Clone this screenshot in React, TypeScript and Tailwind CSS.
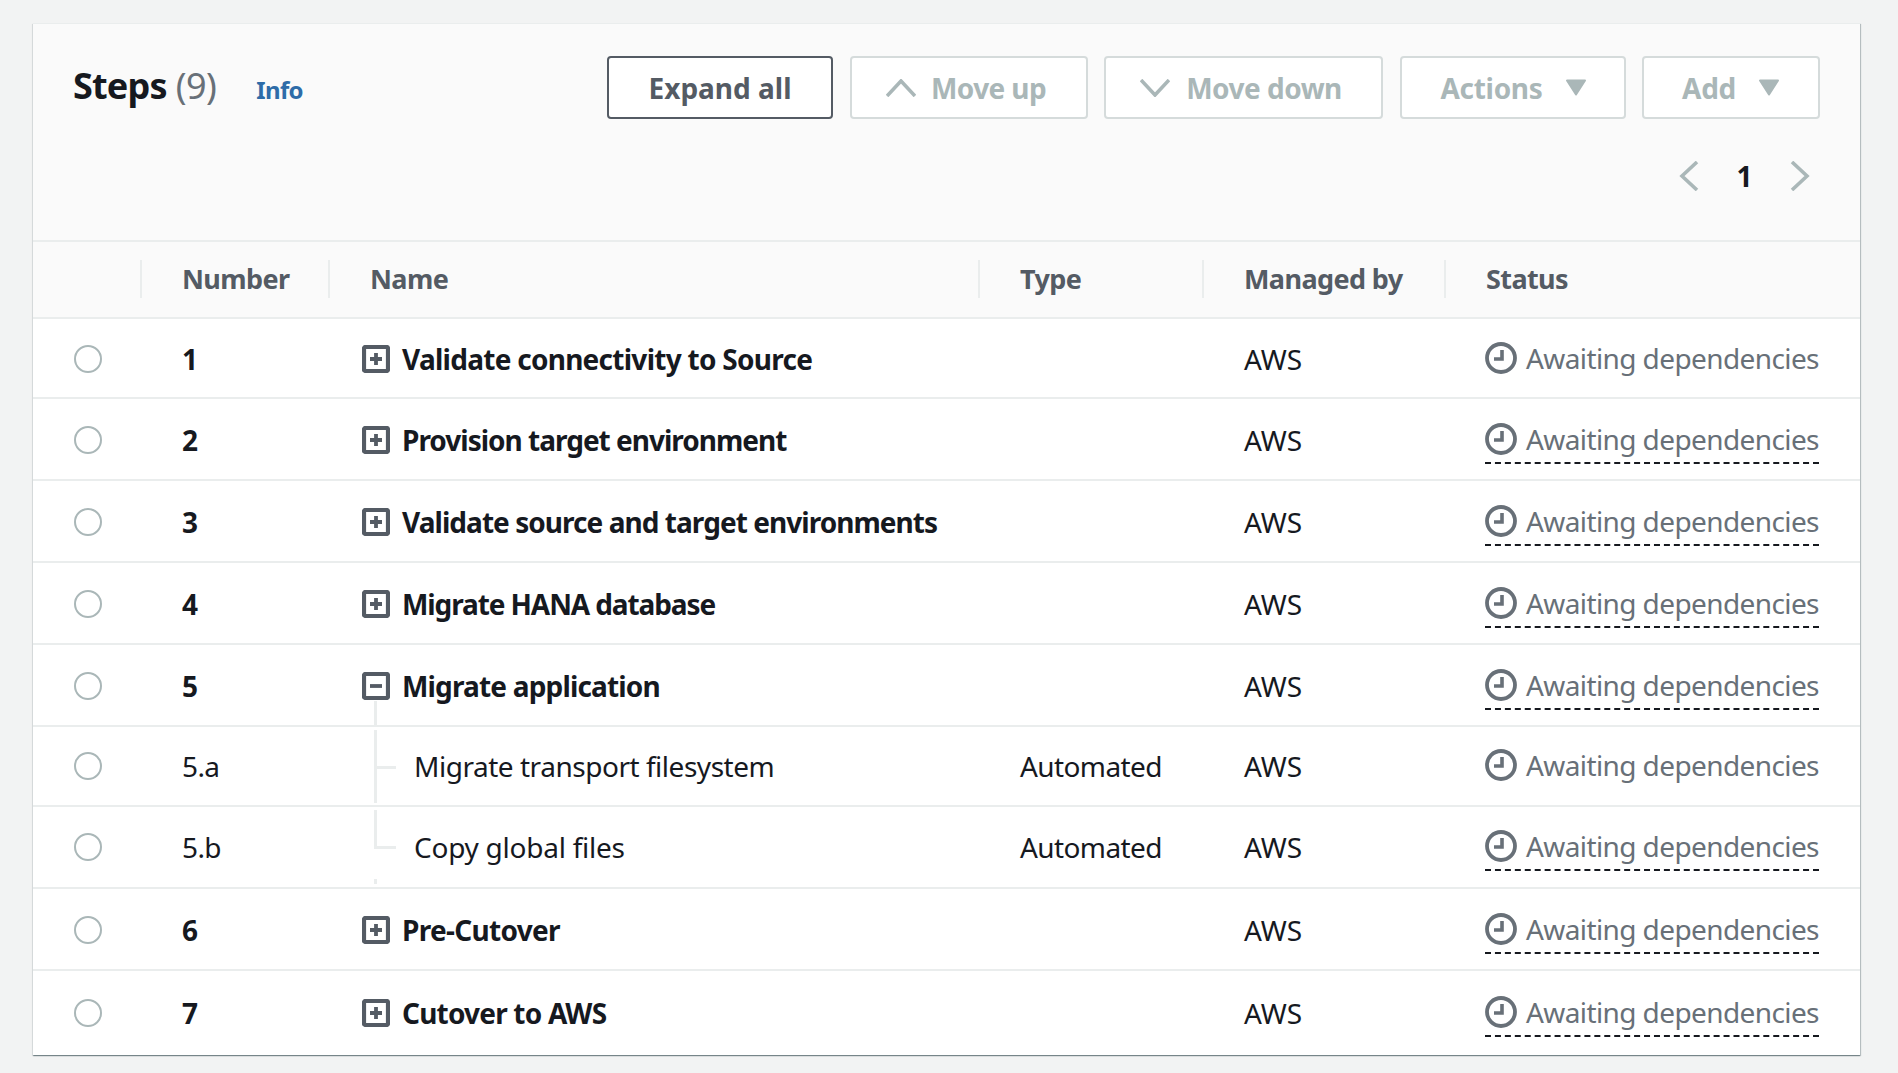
import React from "react";

const GRID = "grid grid-cols-[107px_188px_650px_224px_242px_1fr]";

function Chevron({ d, w = 30, h = 18, vb = "0 0 30 18" }: { d: string; w?: number; h?: number; vb?: string }) {
  return (
    <svg width={w} height={h} viewBox={vb} fill="none" stroke="#aab7b8" strokeWidth="3.6">
      <path d={d} />
    </svg>
  );
}

function Caret() {
  return (
    <svg width="22" height="17" viewBox="0 0 22 17">
      <path d="M2 1.5h18L11 15.5z" fill="#aab7b8" stroke="#aab7b8" strokeWidth="2" strokeLinejoin="round" />
    </svg>
  );
}

function Btn({ className, children }: { className: string; children: React.ReactNode }) {
  return (
    <button className={`flex h-[63px] items-center justify-center rounded-[4px] border-2 bg-white text-[28px] font-bold ${className}`}>
      {children}
    </button>
  );
}

function Toggle({ open }: { open: boolean }) {
  return (
    <svg className="shrink-0" width="28" height="28" viewBox="0 0 28 28" fill="none">
      <rect x="2" y="2" width="24" height="24" rx="1.5" stroke="#545b64" strokeWidth="4.2" />
      <path d={open ? "M8 14h12" : "M8 14h12M14 8v12"} stroke="#545b64" strokeWidth="3.8" />
    </svg>
  );
}

function Clock() {
  return (
    <svg className="shrink-0" width="32" height="32" viewBox="0 0 32 32" fill="none">
      <circle cx="16" cy="16" r="14" stroke="#687078" strokeWidth="3.8" />
      <path d="M17 8v9H9" stroke="#687078" strokeWidth="3.6" />
    </svg>
  );
}

type Row = { no: string; name: string; h: string; track: string; bold: boolean; dashed: boolean; open?: boolean; type?: string; child?: "mid" | "last" };

const rows: Row[] = [
  { no: "1", name: "Validate connectivity to Source", h: "h-[80px]", track: "tracking-[-0.73px]", bold: true, dashed: false },
  { no: "2", name: "Provision target environment", h: "h-[82px]", track: "tracking-[-1px]", bold: true, dashed: true },
  { no: "3", name: "Validate source and target environments", h: "h-[82px]", track: "tracking-[-0.95px]", bold: true, dashed: true },
  { no: "4", name: "Migrate HANA database", h: "h-[82px]", track: "tracking-[-1.1px]", bold: true, dashed: true },
  { no: "5", name: "Migrate application", h: "h-[82px]", track: "tracking-[-0.83px]", bold: true, dashed: true, open: true },
  { no: "5.a", name: "Migrate transport filesystem", h: "h-[80px]", track: "tracking-[-0.47px]", bold: false, dashed: false, type: "Automated", child: "mid" },
  { no: "5.b", name: "Copy global files", h: "h-[82px]", track: "tracking-[-0.25px]", bold: false, dashed: true, type: "Automated", child: "last" },
  { no: "6", name: "Pre-Cutover", h: "h-[82px]", track: "tracking-[-0.7px]", bold: true, dashed: true },
  { no: "7", name: "Cutover to AWS", h: "h-[84px]", track: "tracking-[-0.8px]", bold: true, dashed: true },
];

function HeadCell({ children }: { children?: React.ReactNode }) {
  return <div className="mb-[1px] flex h-[38px] items-center border-l-2 border-[#eaeded] pl-[40px]">{children}</div>;
}

export default function App() {
  return (
    <div
      className="h-[1073px] w-[1898px] overflow-hidden bg-[#f2f3f3] pl-[33px] pt-[23px] text-[28px] leading-[40px] tracking-[-0.6px] text-[#16191f]"
      style={{ fontFamily: '"Noto Sans", "Open Sans", sans-serif' }}
    >
      <div className="h-[1032px] w-[1827px] border-t border-[#eaeded] bg-white shadow-[0_1px_1px_0_rgba(0,28,36,0.35),1px_1px_1px_0_rgba(0,28,36,0.2),-1px_1px_1px_0_rgba(0,28,36,0.06)]">
        <div className="h-[218px] border-b-2 border-[#eaeded] bg-[#fafafa] px-[40px] pt-[32px]">
          <div className="flex items-start justify-between">
            <div className="flex items-center pt-[6px]">
              <span className="text-[36px] font-bold leading-[46px] tracking-[-0.8px]">Steps</span>
              <span className="ml-[9px] text-[36px] leading-[46px] text-[#687078]">(9)</span>
              <span className="ml-[40px] mt-[8px] text-[24px] font-bold tracking-[-0.6px] text-[#2e6ca8]">Info</span>
            </div>
            <div className="flex gap-[16.5px]">
              <Btn className="w-[226px] border-[#545b64] tracking-[0px] text-[#545b64]">Expand all</Btn>
              <Btn className="w-[238px] gap-[15px] border-[#d5dbdb] pr-[5px] tracking-[-0.6px] text-[#aab7b8]">
                <Chevron d="M1 17 15 2l14 15" />
                Move up
              </Btn>
              <Btn className="w-[279px] gap-[16px] border-[#d5dbdb] pr-[5px] tracking-[-0.5px] text-[#aab7b8]">
                <Chevron d="M1 1l14 15L29 1" />
                Move down
              </Btn>
              <Btn className="w-[226px] gap-[22px] border-[#d5dbdb] pl-[2px] tracking-[-0.3px] text-[#aab7b8]">
                Actions
                <Caret />
              </Btn>
              <Btn className="w-[178px] gap-[22px] border-[#d5dbdb] tracking-[-0.3px] text-[#aab7b8]">
                Add
                <Caret />
              </Btn>
            </div>
          </div>
          <div className="mt-[40px] flex h-[34px] items-center justify-end pr-[10px]">
            <Chevron w={20} h={30} vb="0 0 20 30" d="M18 1 3 15l15 14" />
            <span className="mx-[38px] font-bold">1</span>
            <Chevron w={20} h={30} vb="0 0 20 30" d="M2 1l15 14L2 29" />
          </div>
        </div>

        <div className={`${GRID} h-[77px] items-center border-b-2 border-[#eaeded] bg-[#fafafa] text-[27px] font-bold text-[#545b64]`}>
          <div />
          <HeadCell>Number</HeadCell>
          <HeadCell>Name</HeadCell>
          <HeadCell>Type</HeadCell>
          <HeadCell>Managed by</HeadCell>
          <HeadCell>Status</HeadCell>
        </div>

        {rows.map((r, i) => {
          const last = i === rows.length - 1;
          const pt = r.child || last ? "" : "pt-[2px]";
          return (
            <div key={r.no} className={`${GRID} ${r.h} items-center ${last ? "" : "border-b-2 border-[#eaeded]"}`}>
              <div className={`pl-[41px] ${pt}`}>
                <div className="h-[28px] w-[28px] rounded-full border-2 border-[#aab7b8] bg-white" />
              </div>
              <div className={`pl-[42px] ${pt} ${r.bold ? "font-bold" : ""}`}>{r.no}</div>
              <div className={`relative flex h-full items-center ${pt}`}>
                {r.open && <div className="absolute left-[46px] top-[56px] h-[26px] w-[3px] bg-[#eaeded]" />}
                {r.child === "mid" && (
                  <>
                    <div className="absolute left-[46px] top-[3px] h-[73px] w-[3px] bg-[#eaeded]" />
                    <div className="absolute left-[48px] top-[39px] h-[3px] w-[20px] bg-[#eaeded]" />
                  </>
                )}
                {r.child === "last" && (
                  <>
                    <div className="absolute left-[46px] top-[3px] h-[39px] w-[3px] bg-[#eaeded]" />
                    <div className="absolute left-[48px] top-[39px] h-[3px] w-[20px] bg-[#eaeded]" />
                    <div className="absolute left-[46px] top-[72px] h-[5px] w-[3px] bg-[#eaeded]" />
                  </>
                )}
                {r.child ? (
                  <span className={`pl-[86px] ${r.track}`}>{r.name}</span>
                ) : (
                  <div className="flex items-center gap-[12px] pl-[34px] font-bold">
                    <Toggle open={!!r.open} />
                    <span className={r.track}>{r.name}</span>
                  </div>
                )}
              </div>
              <div className={`pl-[42px] ${pt}`}>{r.type}</div>
              <div className={`pl-[42px] tracking-[0px] ${pt}`}>AWS</div>
              <div className={`pl-[41px] ${r.child ? "pt-[2px]" : last ? "pt-[2px]" : "pt-[4px]"}`}>
                <div className={`inline-flex h-[46px] items-center gap-[9px] border-b-2 pb-[2px] ${r.dashed ? "border-dashed border-[#16191f]" : "border-transparent"} text-[#687078]`}>
                  <Clock />
                  <span>Awaiting dependencies</span>
                </div>
              </div>
            </div>
          );
        })}
      </div>
    </div>
  );
}
